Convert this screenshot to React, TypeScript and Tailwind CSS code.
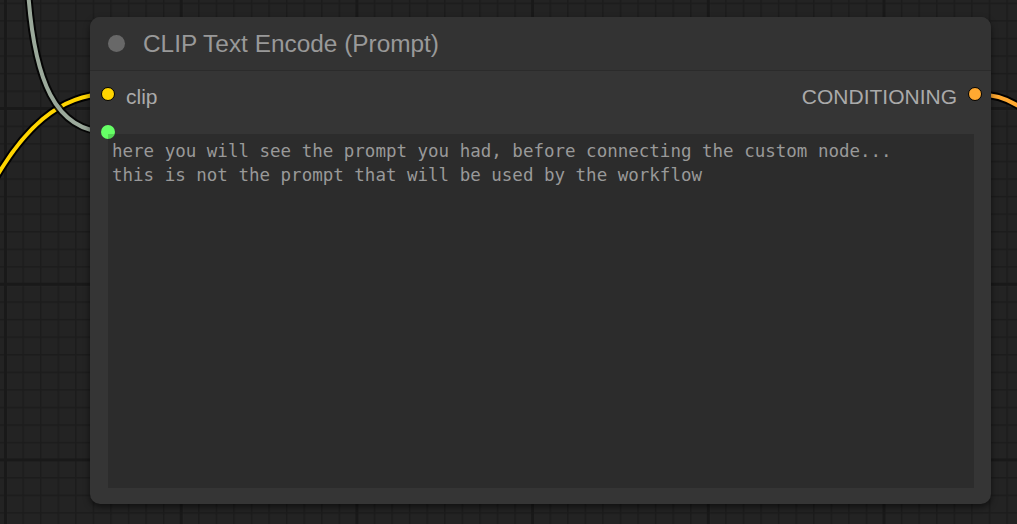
import React from 'react';

const sans = { fontFamily: '"Liberation Sans", Arial, sans-serif' };

function CanvasGrid() {
  return (
    <svg className="absolute inset-0 h-full w-full" width="1017" height="524">
      <defs>
        <pattern id="minor" patternUnits="userSpaceOnUse" x="4.8" y="2.6" width="17.57" height="17.57">
          <rect x="0" y="0" width="1.5" height="17.57" fill="#1c1c1c" />
          <rect x="0" y="0" width="17.57" height="1.5" fill="#1c1c1c" />
        </pattern>
        <pattern id="major" patternUnits="userSpaceOnUse" x="4" y="107" width="175.7" height="175.7">
          <rect x="0" y="0" width="3" height="175.7" fill="#191919" />
          <rect x="0" y="0" width="175.7" height="3" fill="#191919" />
        </pattern>
      </defs>
      <rect width="100%" height="100%" fill="#232323" />
      <rect width="100%" height="100%" fill="url(#minor)" />
      <rect width="100%" height="100%" fill="url(#major)" />
    </svg>
  );
}

function Wires() {
  const yellow = 'M108 94 C 60 94, 22 128, -12 192';
  const gray = 'M108 132 C 55 132, 34 80, 28 -10';
  const orange = 'M975 94 C 1008 94, 1030 108, 1062 150';
  return (
    <svg className="absolute inset-0 h-full w-full" width="1017" height="524" fill="none">
      <path d={yellow} stroke="#000" strokeWidth="8" />
      <path d={yellow} stroke="#ffd500" strokeWidth="4" />
      <path d={gray} stroke="#000" strokeWidth="8" strokeOpacity="0.85" />
      <path d={gray} stroke="#9ba99b" strokeWidth="4" />
      <path d={orange} stroke="#000" strokeWidth="8" />
      <path d={orange} stroke="#ffa931" strokeWidth="4" />
    </svg>
  );
}

function ClipTextNode() {
  return (
    <div
      className="absolute left-[90px] top-[17px] flex w-[901px] flex-col overflow-hidden rounded-[10px] bg-[#353535] shadow-[0_3px_6px_rgba(0,0,0,0.55)]"
      style={sans}
    >
      <div className="flex h-[54px] items-center border-b border-[#2b2b2b] bg-[#333] pl-[18px]">
        <span className="h-[17px] w-[17px] rounded-full bg-[#686868]" />
        <span className="relative top-[1px] ml-[18px] text-[24.4px] leading-none text-[#999]">
          CLIP Text Encode (Prompt)
        </span>
      </div>

      <div className="flex h-[46px] items-center justify-between pl-[11px] pr-[9px]">
        <div className="flex items-center gap-[11px]">
          <span className="h-[14px] w-[14px] rounded-full border border-black bg-[#ffd500]" />
          <span className="relative top-[2px] text-[21px] leading-none text-[#aaa]">clip</span>
        </div>
        <div className="flex items-center gap-[11px]">
          <span className="relative top-[2px] text-[21px] leading-none text-[#aaa]">CONDITIONING</span>
          <span className="h-[14px] w-[14px] rounded-full border border-black bg-[#ffa931]" />
        </div>
      </div>

      <div className="relative mx-[17px] mb-[16px] ml-[18px] mt-[17px]">
        <span className="absolute left-[-7px] top-[-9px] h-[14px] w-[14px] rounded-full bg-[#6f6]" />
        <div
          className="relative h-[354px] whitespace-pre bg-black/[0.17] px-[4px] pt-[5px] text-[17.5px] leading-[24px] text-[#999]"
          style={{ fontFamily: '"DejaVu Sans Mono", "Liberation Mono", monospace' }}
        >
          {'here you will see the prompt you had, before connecting the custom node...\nthis is not the prompt that will be used by the workflow'}
        </div>
      </div>
    </div>
  );
}

export default function App() {
  return (
    <div className="relative h-[524px] w-[1017px] overflow-hidden bg-[#232323]">
      <CanvasGrid />
      <Wires />
      <ClipTextNode />
    </div>
  );
}
